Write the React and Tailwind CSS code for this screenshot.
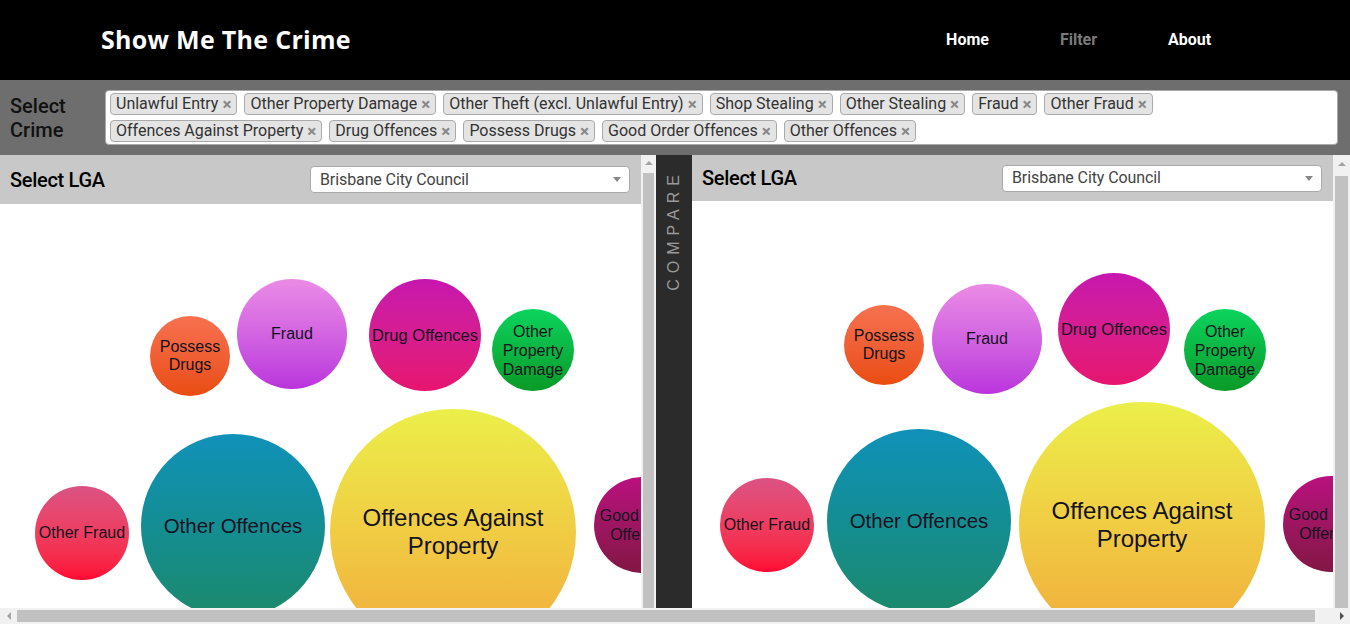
import React from 'react'

const crimes = [
  'Unlawful Entry',
  'Other Property Damage',
  'Other Theft (excl. Unlawful Entry)',
  'Shop Stealing',
  'Other Stealing',
  'Fraud',
  'Other Fraud',
  'Offences Against Property',
  'Drug Offences',
  'Possess Drugs',
  'Good Order Offences',
  'Other Offences',
]

// bubble styles, written out so tailwind picks them up
const bubbleStyles = {
  possess: 'bg-linear-to-b from-[#f7714f] to-[#e94c0c] text-[16px] leading-[18px]',
  fraud: 'bg-linear-to-b from-[#eb8be5] to-[#ba33dc] text-[16px] leading-[18px]',
  drug: 'bg-linear-to-b from-[#c716ae] to-[#e7146e] text-[16.5px] leading-[18px]',
  property: 'bg-linear-to-b from-[#0bd45d] to-[#0a9a26] text-[16px] leading-[19px]',
  otherFraud: 'bg-linear-to-b from-[#db5283] to-[#ff0533] text-[16px] leading-[18px]',
  otherOffences: 'bg-linear-to-b from-[#1191b9] to-[#1c896b] text-[20.5px] leading-[24px]',
  against: 'bg-linear-to-b from-[#ebef4a] to-[#f1a93c] text-[24px] leading-[28px]',
  goodOrder: 'bg-linear-to-b from-[#b9107f] to-[#831644] text-[16px] leading-[19px]',
}

const leftBubbles = [
  { key: 'possess', lines: ['Possess', 'Drugs'], x: 150, y: 112, d: 80 },
  { key: 'fraud', lines: ['Fraud'], x: 237, y: 75, d: 110 },
  { key: 'drug', lines: ['Drug Offences'], x: 369, y: 75, d: 112 },
  { key: 'property', lines: ['Other', 'Property', 'Damage'], x: 492, y: 105, d: 82 },
  { key: 'otherFraud', lines: ['Other Fraud'], x: 35, y: 282, d: 94 },
  { key: 'otherOffences', lines: ['Other Offences'], x: 141, y: 230, d: 184 },
  { key: 'against', lines: ['Offences Against', 'Property'], x: 330, y: 205, d: 246 },
  { key: 'goodOrder', lines: ['Good Order', 'Offences'], x: 594, y: 273, d: 96 },
]

const rightBubbles = [
  { key: 'possess', lines: ['Possess', 'Drugs'], x: 152, y: 104, d: 80 },
  { key: 'fraud', lines: ['Fraud'], x: 240, y: 83, d: 110 },
  { key: 'drug', lines: ['Drug Offences'], x: 366, y: 72, d: 112 },
  { key: 'property', lines: ['Other', 'Property', 'Damage'], x: 492, y: 108, d: 82 },
  { key: 'otherFraud', lines: ['Other Fraud'], x: 28, y: 277, d: 94 },
  { key: 'otherOffences', lines: ['Other Offences'], x: 135, y: 228, d: 184 },
  { key: 'against', lines: ['Offences Against', 'Property'], x: 327, y: 201, d: 246 },
  { key: 'goodOrder', lines: ['Good Order', 'Offences'], x: 591, y: 275, d: 96 },
]

function Bubble({ b }) {
  return (
    <div
      className={`absolute rounded-full flex flex-col items-center justify-center text-center text-[#14121e] font-['Liberation_Sans',Arial,sans-serif] whitespace-nowrap ${bubbleStyles[b.key]}`}
      style={{ left: b.x, top: b.y, width: b.d, height: b.d }}
    >
      {b.lines.map((l) => (
        <span key={l}>{l}</span>
      ))}
    </div>
  )
}

function LgaSelect() {
  return (
    <div className="w-[320px] h-[27px] bg-white border border-[#aaa] rounded-[4px] flex items-center justify-between pl-[9px] pr-[8px]">
      <span className="text-[16px] text-[#444] tracking-[-0.1px]">Brisbane City Council</span>
      <span className="w-0 h-0 border-l-[4px] border-r-[4px] border-t-[5px] border-l-transparent border-r-transparent border-t-[#888]" />
    </div>
  )
}

function VScrollbar({ thumbTop, arrowH }) {
  return (
    <div className="h-full bg-[#f1f1f1] flex flex-col items-center">
      <div className="flex items-center justify-center" style={{ height: arrowH }}>
        <span className="w-0 h-0 border-l-[4px] border-r-[4px] border-b-[4px] border-l-transparent border-r-transparent border-b-[#a3a3a3]" />
      </div>
      <div className="w-full px-[2px] flex-1" style={{ paddingTop: thumbTop - arrowH }}>
        <div className="w-full h-full bg-[#c1c1c1]" />
      </div>
    </div>
  )
}

function Panel({ headerH, bubbles }) {
  return (
    <div className="w-[641px] h-full flex flex-col">
      <div
        className="bg-[#c8c8c8] flex items-center justify-between pl-[10px] pr-[11px] shrink-0"
        style={{ height: headerH }}
      >
        <span className="text-[20px] font-medium text-black tracking-[-0.3px]">Select LGA</span>
        <LgaSelect />
      </div>
      <div className="relative flex-1 bg-white overflow-hidden">
        {bubbles.map((b) => (
          <Bubble key={b.key} b={b} />
        ))}
      </div>
    </div>
  )
}

export default function App() {
  return (
    <div className="w-[1350px] h-[624px] overflow-hidden flex flex-col bg-white font-['Roboto',sans-serif]">
      {/* Header */}
      <header className="h-[80px] bg-black flex items-center justify-between pl-[101px] pr-[105px] shrink-0">
        <h1 className="text-white text-[25px] font-bold font-['Open_Sans',sans-serif] tracking-[0.3px]">
          Show Me The Crime
        </h1>
        <nav className="flex text-[16px] font-bold">
          <a className="w-[111px] text-center text-white">Home</a>
          <a className="w-[111px] text-center text-[#7a7a7a]">Filter</a>
          <a className="w-[111px] text-center text-white">About</a>
        </nav>
      </header>

      {/* Crime filter */}
      <div className="h-[75px] bg-[#6e6e6e] flex items-start pl-[10px] pr-[12px] pt-[10px] shrink-0">
        <div className="w-[95px] pt-[4px] text-[20px] leading-[24px] font-medium text-[#111]">
          Select
          <br />
          Crime
        </div>
        <div className="flex-1 h-[55px] bg-white border border-[#aaa] rounded-[4px] flex flex-wrap content-start gap-x-[7px] gap-y-[5px] pl-[4px] pt-[2px]">
          {crimes.map((c) => (
            <span
              key={c}
              className="h-[22px] flex items-center gap-[4px] px-[5px] bg-[#e4e4e4] border border-[#aaa] rounded-[4px] text-[16px] text-[#333]"
            >
              {c}
              <span className="text-[#888] font-bold text-[17px] leading-none">×</span>
            </span>
          ))}
        </div>
      </div>

      {/* Compare panels */}
      <div className="flex-1 flex min-h-0">
        <Panel headerH={49} bubbles={leftBubbles} />
        <div className="w-[15px] h-full">
          <VScrollbar thumbTop={18} arrowH={16} />
        </div>
        <div className="w-[36px] h-full bg-[#2b2b2b] flex justify-center pt-[14px]">
          <span className="[writing-mode:vertical-rl] rotate-180 h-fit text-[16px] tracking-[6px] text-[#9a9a9a] font-['Liberation_Sans',Arial,sans-serif]">
            COMPARE
          </span>
        </div>
        <Panel headerH={46} bubbles={rightBubbles} />
        <div className="w-[17px] h-full">
          <VScrollbar thumbTop={21} arrowH={18} />
        </div>
      </div>

      {/* Horizontal scrollbar */}
      <div className="h-[16px] bg-[#f1f1f1] flex items-center shrink-0">
        <div className="w-[17px] flex justify-center">
          <span className="w-0 h-0 border-t-[4px] border-b-[4px] border-r-[4px] border-t-transparent border-b-transparent border-r-[#a3a3a3]" />
        </div>
        <div className="flex-1 h-[12px] bg-[#c1c1c1]" />
        <div className="w-[18px]" />
        <div className="w-[17px] flex justify-center">
          <span className="w-0 h-0 border-t-[4px] border-b-[4px] border-l-[4px] border-t-transparent border-b-transparent border-l-[#505050]" />
        </div>
      </div>
    </div>
  )
}
